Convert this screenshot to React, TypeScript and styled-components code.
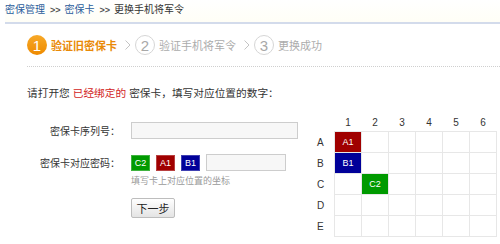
import React from 'react';
import styled, { createGlobalStyle } from 'styled-components';

const Global = createGlobalStyle`
  html, body { margin: 0; padding: 0; background: #fff; }
  body {
    font-family: "Liberation Sans", "Noto Sans CJK SC", sans-serif;
    font-size: 10px;
    color: #333;
    width: 500px;
    height: 244px;
    overflow: hidden;
  }
`;

const Breadcrumb = styled.div`
  margin-left: 5px;
  height: 22px;
  line-height: 20px;
  border-bottom: 2px solid #d3dbeb;
  font-size: 10px;
  color: #333;
  white-space: nowrap;
  background: linear-gradient(#fff, #fffef6);
`;

const Crumb = styled.a`
  color: #2b5d9c;
  text-decoration: none;
`;

const Sep = styled.span`
  margin: 0 4px 0 5px;
  font-size: 9px;
  font-weight: bold;
  color: #555;
`;

const Steps = styled.div`
  margin-left: 27px;
  height: 42px;
  display: flex;
  align-items: center;
  border-bottom: 1px dotted #cfcfcf;
`;

const Circle = styled.span<{ $active?: boolean }>`
  flex: none;
  width: 20px;
  height: 20px;
  border-radius: 50%;
  box-sizing: border-box;
  display: flex;
  align-items: center;
  justify-content: center;
  font-family: "Liberation Sans", sans-serif;
  font-size: 15px;
  background: ${p => (p.$active ? 'linear-gradient(#f7a928, #ee8a00)' : '#fff')};
  border: ${p => (p.$active ? 'none' : '1px solid #d6d6d6')};
  color: ${p => (p.$active ? '#fff' : '#a8a8a8')};
`;

const StepText = styled.span<{ $active?: boolean }>`
  margin-left: 4px;
  font-size: 11px;
  font-weight: ${p => (p.$active ? 'bold' : 'normal')};
  color: ${p => (p.$active ? '#e98a08' : '#acacac')};
`;

const Chevron = styled.svg`
  flex: none;
  margin: 0 4px 0 8px;
`;

const Intro = styled.p`
  margin: 17px 0 0 27px;
  line-height: 18px;
  font-size: 10.7px;
  color: #333;
`;

const Hot = styled.span`
  color: #d21d1d;
`;

const Content = styled.div`
  display: flex;
  align-items: flex-start;
`;

const Form = styled.div`
  flex: none;
  width: 300px;
  padding-left: 27px;
  padding-top: 20px;
  box-sizing: border-box;
`;

const Row = styled.div<{ $gap?: number }>`
  display: flex;
  align-items: center;
  height: 17px;
  margin-top: ${p => p.$gap ?? 0}px;
`;

const Label = styled.span`
  flex: none;
  width: 93px;
  text-align: right;
  margin-right: 11px;
  font-size: 10px;
  color: #333;
  white-space: nowrap;
`;

const Input = styled.input<{ $w: number }>`
  flex: none;
  width: ${p => p.$w}px;
  height: 17px;
  box-sizing: border-box;
  border: 1px solid #cdcdcd;
  background: #f7f7f7;
  padding: 0;
  margin: 0;
  outline: none;
`;

const Badge = styled.span<{ $bg: string }>`
  flex: none;
  width: 19px;
  height: 16px;
  margin-right: 6px;
  display: flex;
  align-items: center;
  justify-content: center;
  background: ${p => p.$bg};
  color: #fff;
  font-size: 9px;
  box-shadow: inset 0 0 0 1px rgba(255, 255, 255, 0.25);
`;

const Hint = styled.div`
  margin: 3px 0 0 104px;
  line-height: 14px;
  font-size: 9px;
  color: #9a9a9a;
`;

const Button = styled.button`
  margin: 10px 0 0 104px;
  width: 44px;
  height: 20px;
  box-sizing: border-box;
  border: 1px solid #bdbdbd;
  border-radius: 2px;
  background: linear-gradient(#ffffff, #e4e4e4);
  font-family: "Liberation Sans", "Noto Sans CJK SC", sans-serif;
  font-size: 11px;
  color: #222;
  padding: 0;
`;

const Card = styled.table`
  flex: none;
  margin: 12px 0 0 17px;
  border-collapse: collapse;
  font-family: "Liberation Sans", sans-serif;
  font-size: 10px;
  color: #333;
`;

const Head = styled.th`
  height: 17px;
  font-weight: normal;
  text-align: center;
  padding: 0;
`;

const RowLabel = styled.th`
  width: 17px;
  font-weight: normal;
  text-align: left;
  padding: 0;
`;

const Cell = styled.td<{ $bg?: string }>`
  width: 26px;
  height: 20px;
  padding: 0;
  border: 1px solid #e7e7e7;
  background: ${p => p.$bg ?? '#fff'};
  color: #fff;
  font-size: 9px;
  text-align: center;
`;

const Chev = () => (
  <Chevron width="6" height="10" viewBox="0 0 6 10">
    <polyline points="0.5,0.5 5,5 0.5,9.5" fill="none" stroke="#c4c4c4" strokeWidth="1" />
  </Chevron>
);

const rows = ['A', 'B', 'C', 'D', 'E'];
const cols = [1, 2, 3, 4, 5, 6];
const marks: Record<string, string> = { A1: '#a00000', B1: '#000099', C2: '#009a00' };

export default function App() {
  return (
    <>
      <Global />
      <Breadcrumb>
        <Crumb>密保管理</Crumb>
        <Sep>&gt;&gt;</Sep>
        <Crumb>密保卡</Crumb>
        <Sep>&gt;&gt;</Sep>
        更换手机将军令
      </Breadcrumb>
      <Steps>
        <Circle $active>1</Circle>
        <StepText $active>验证旧密保卡</StepText>
        <Chev />
        <Circle>2</Circle>
        <StepText>验证手机将军令</StepText>
        <Chev />
        <Circle>3</Circle>
        <StepText>更换成功</StepText>
      </Steps>
      <Intro>
        请打开您 <Hot>已经绑定的</Hot> 密保卡，填写对应位置的数字：
      </Intro>
      <Content>
        <Form>
          <Row>
            <Label>密保卡序列号：</Label>
            <Input $w={167} />
          </Row>
          <Row $gap={15}>
            <Label>密保卡对应密码：</Label>
            <Badge $bg="#009a00">C2</Badge>
            <Badge $bg="#a00000">A1</Badge>
            <Badge $bg="#000099">B1</Badge>
            <Input $w={80} />
          </Row>
          <Hint>填写卡上对应位置的坐标</Hint>
          <Button>下一步</Button>
        </Form>
        <Card>
          <thead>
            <tr>
              <RowLabel />
              {cols.map(c => (
                <Head key={c}>{c}</Head>
              ))}
            </tr>
          </thead>
          <tbody>
            {rows.map(r => (
              <tr key={r}>
                <RowLabel>{r}</RowLabel>
                {cols.map(c => {
                  const k = `${r}${c}`;
                  return (
                    <Cell key={k} $bg={marks[k]}>
                      {marks[k] ? k : ''}
                    </Cell>
                  );
                })}
              </tr>
            ))}
          </tbody>
        </Card>
      </Content>
    </>
  );
}
